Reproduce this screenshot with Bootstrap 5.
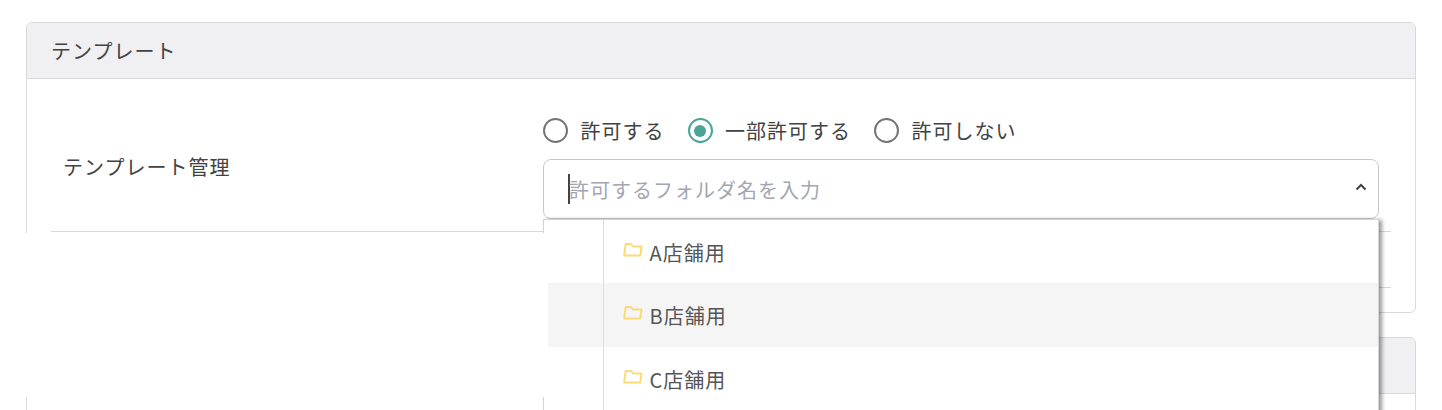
<!DOCTYPE html>
<html lang="ja">
<head>
<meta charset="utf-8">
<title>テンプレート</title>
<link rel="stylesheet" href="https://cdn.jsdelivr.net/npm/bootstrap@5.3.0/dist/css/bootstrap.min.css">
<style>
html,body{height:410px;overflow:hidden;background:#fff}
body{font-family:"Noto Sans CJK JP","Liberation Sans",sans-serif;color:#424242;font-size:20px;letter-spacing:1px;position:relative}
.perm-wrap{padding:22px 26px 0 26px;display:flex;flex-direction:column;gap:24px}
.perm-card{border:1px solid #d9d9d9;border-radius:6px;overflow:hidden;background:#fff}
.perm-head{background:#f0f0f2;height:56px;padding:0 24px;display:flex;align-items:center;border-bottom:1px solid #d9d9d9;line-height:1}
.perm-body{padding:0 24px}
.perm-row{height:153px;padding-top:26px;border-bottom:1px solid #d9d9d9;display:flex;align-items:center}
.perm-filler{height:56px;border-bottom:1px solid #d9d9d9}
.perm-last{height:24px}
.perm-label{width:492px;padding-left:12px;flex:none;line-height:1;padding-bottom:2px}
.perm-field{flex:1;padding-right:12px}
.perm-radios{display:flex;gap:23px;height:26px;align-items:center;margin-bottom:15px}
.perm-radio{display:flex;align-items:center;gap:12.500px;line-height:1}
.perm-dot{width:25px;height:25px;border-radius:50%;border:2px solid #757575;background:#fff;flex:none;position:relative}
.perm-dot.on{border-color:#4aa598}
.perm-dot.on::after{content:"";position:absolute;left:4.500px;top:4.500px;width:12px;height:12px;border-radius:50%;background:#4aa598}
.perm-select{height:60px;border:1px solid #c8c8c8;border-radius:8px;display:flex;align-items:center;padding:0 11px 0 24px;background:#fff}
.perm-caret{width:2px;height:30px;background:#424242;flex:none;margin-right:-1px}
.perm-ph{color:#a3a6b0;line-height:1;flex:1;padding-top:2px}
.perm-select svg{margin-top:-3px}
.perm-menu{position:absolute;left:543px;top:219px;width:836px;height:200px;background:#fff;border:1px solid #d4d4d4;border-bottom:0;box-shadow:3px 1px 4px rgba(0,0,0,.4);z-index:2}
.perm-item{height:64px;padding-left:78.500px;display:flex;align-items:center;position:relative;padding-top:2px}
.perm-item:first-of-type{height:63px}
.perm-item.hov{background:#f5f5f5;margin-left:4px;padding-left:74.500px}
.perm-rule{position:absolute;left:59px;top:0;bottom:0;width:1px;background:#dcdcdc;z-index:1}
.perm-name{line-height:1;display:flex;align-items:center;gap:7px;color:#555;letter-spacing:1px}
.perm-name svg{margin-top:-7px;flex:none}
.perm-mask{position:absolute;left:0;top:233px;width:543.500px;height:164px;background:#fff;z-index:3}
.perm-mask-line{position:absolute;left:51px;top:231px;width:492px;height:1px;background:#d9d9d9;z-index:3}
</style>
</head>
<body>
<div class="perm-wrap">
  <section class="perm-card">
    <div class="perm-head">テンプレート</div>
    <div class="perm-body">
      <div class="perm-row">
        <div class="perm-label">テンプレート管理</div>
        <div class="perm-field">
          <div class="perm-radios">
            <div class="perm-radio"><span class="perm-dot"></span>許可する</div>
            <div class="perm-radio"><span class="perm-dot on"></span>一部許可する</div>
            <div class="perm-radio"><span class="perm-dot"></span>許可しない</div>
          </div>
          <div class="perm-select">
            <span class="perm-caret"></span>
            <span class="perm-ph">許可するフォルダ名を入力</span>
            <svg width="12" height="8" viewBox="0 0 12 8" fill="none" stroke="#424242" stroke-width="2"><path d="M1.500 6.500 6 2l4.500 4.500"/></svg>
          </div>
        </div>
      </div>
      <div class="perm-filler"></div>
      <div class="perm-last"></div>
    </div>
  </section>
  <section class="perm-card">
    <div class="perm-head">&nbsp;</div>
    <div class="perm-body" style="height:40px"></div>
  </section>
</div>
<div class="perm-menu">
  <span class="perm-rule"></span>
  <div class="perm-item"><span class="perm-name"><svg width="20" height="15" viewBox="0 0 20 15" fill="none" stroke="#fadb78" stroke-width="2" stroke-linejoin="round"><path d="M1.200 13.500 2.600 2H8l2 2.500h8.500l-1.200 9z"/></svg>A店舗用</span></div>
  <div class="perm-item hov"><span class="perm-name"><svg width="20" height="15" viewBox="0 0 20 15" fill="none" stroke="#fadb78" stroke-width="2" stroke-linejoin="round"><path d="M1.200 13.500 2.600 2H8l2 2.500h8.500l-1.200 9z"/></svg>B店舗用</span></div>
  <div class="perm-item"><span class="perm-name"><svg width="20" height="15" viewBox="0 0 20 15" fill="none" stroke="#fadb78" stroke-width="2" stroke-linejoin="round"><path d="M1.200 13.500 2.600 2H8l2 2.500h8.500l-1.200 9z"/></svg>C店舗用</span></div>
</div>
<div class="perm-mask"></div>
<div class="perm-mask-line"></div>
<script src="https://cdn.jsdelivr.net/npm/bootstrap@5.3.0/dist/js/bootstrap.bundle.min.js"></script>
</body>
</html>
